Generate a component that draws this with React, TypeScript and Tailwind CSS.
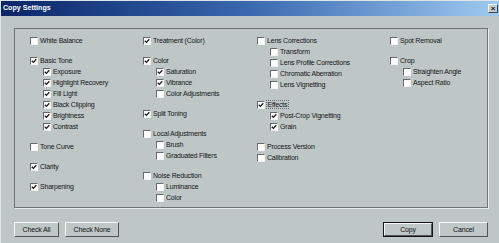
import React from "react";

type Item = { label: string; checked?: boolean; focus?: boolean; tight?: boolean; children?: Item[] };

const columns: { width: string; groups: Item[] }[] = [
  {
    width: "w-[113px]",
    groups: [
      { label: "White Balance" },
      {
        label: "Basic Tone",
        checked: true,
        children: [
          { label: "Exposure", checked: true },
          { label: "Highlight Recovery", checked: true },
          { label: "Fill Light", checked: true },
          { label: "Black Clipping", checked: true },
          { label: "Brightness", checked: true },
          { label: "Contrast", checked: true },
        ],
      },
      { label: "Tone Curve" },
      { label: "Clarity", checked: true },
      { label: "Sharpening", checked: true },
    ],
  },
  {
    width: "w-[114px]",
    groups: [
      { label: "Treatment (Color)", checked: true },
      {
        label: "Color",
        checked: true,
        children: [
          { label: "Saturation", checked: true },
          { label: "Vibrance", checked: true },
          { label: "Color Adjustments" },
        ],
      },
      { label: "Split Toning", checked: true },
      { label: "Local Adjustments", children: [{ label: "Brush" }, { label: "Graduated Filters" }] },
      { label: "Noise Reduction", children: [{ label: "Luminance" }, { label: "Color" }] },
    ],
  },
  {
    width: "w-[133px]",
    groups: [
      {
        label: "Lens Corrections",
        children: [
          { label: "Transform" },
          { label: "Lens Profile Corrections" },
          { label: "Chromatic Aberration" },
          { label: "Lens Vignetting" },
        ],
      },
      {
        label: "Effects",
        checked: true,
        focus: true,
        children: [
          { label: "Post-Crop Vignetting", checked: true },
          { label: "Grain", checked: true },
        ],
      },
      { label: "Process Version" },
      { label: "Calibration", tight: true },
    ],
  },
  {
    width: "flex-1",
    groups: [
      { label: "Spot Removal" },
      { label: "Crop", children: [{ label: "Straighten Angle" }, { label: "Aspect Ratio" }] },
    ],
  },
];

function Box({ checked }: { checked?: boolean }) {
  return <span className="flex h-[8px] w-[8px] shrink-0 items-center justify-center border border-t-[#666a6a] border-l-[#666a6a] border-b-[#f2f4f4] border-r-[#f2f4f4] bg-white">
    {checked && <svg viewBox="0 0 6 6" className="h-[6px] w-[6px]"><path d="M0.8 2.8 L2.4 4.4 L5.3 1.2" stroke="#1b1b1b" strokeWidth="1.3" fill="none" /></svg>}
  </span>;
}

function Row({ item, sub }: { item: Item; sub?: boolean }) {
  return <div className={`flex h-[11px] items-center ${sub ? "pl-[13px]" : ""}`}>
    <Box checked={item.checked} />
    <span className={`whitespace-nowrap leading-none ${item.focus ? "ml-[1px] border border-dotted border-[#6a6e6e] px-[0.5px]" : "ml-[2px]"}`}>{item.label}</span>
  </div>;
}

function Btn({ label, width, primary }: { label: string; width: string; primary?: boolean }) {
  return <div className={`${width} h-[15px] ${primary ? "border border-[#151515]" : ""}`}>
    <div className="flex h-full w-full items-center justify-center border border-t-[#f6f8f8] border-l-[#f6f8f8] border-b-[#4f5454] border-r-[#4f5454] bg-[#bfc7c7] text-[7px] leading-none tracking-[-0.15px] text-[#111]">{label}</div>
  </div>;
}

export default function App() {
  return <div className="flex h-[243px] w-[499px] flex-col overflow-hidden border-l border-t border-[#dfe4e4] bg-[#bec6c6] text-[#141616]" style={{ fontFamily: '"Liberation Sans", Arial, sans-serif' }}>
    <div className="flex h-[15px] shrink-0 items-center justify-between bg-gradient-to-r from-[#0b2468] via-[#3a69b0] to-[#9fcaf0] pl-[2px] pr-[1px]">
      <span className="text-[7.1px] font-bold leading-none text-white">Copy Settings</span>
      <span className="flex h-[9px] w-[10px] items-center justify-center border border-t-[#f4f4f4] border-l-[#f4f4f4] border-b-[#404444] border-r-[#404444] bg-[#c4cbcb] text-[8px] font-bold leading-none text-[#1a1a1a]">×</span>
    </div>
    <div className="ml-[13px] mt-[12px] flex h-[180px] w-[474px] shrink-0 border border-[#6f7575] pl-[15px] pt-[6px] text-[7px] tracking-[-0.2px] shadow-[1px_1px_0_#e8eded]">
      {columns.map((col, ci) => <div key={ci} className={`${col.width} flex flex-col`}>
        {col.groups.map((g, gi) => <div key={gi} className={gi > 0 && !g.tight ? "mt-[9px]" : ""}>
          <Row item={g} />
          {g.children?.map((c, k) => <Row key={k} item={c} sub />)}
        </div>)}
      </div>)}
    </div>
    <div className="mt-[14px] flex pl-[13px] pr-[11px]">
      <div className="flex gap-[6px]">
        <Btn label="Check All" width="w-[45px]" />
        <Btn label="Check None" width="w-[54px]" />
      </div>
      <div className="ml-auto flex gap-[6px]">
        <Btn label="Copy" width="w-[50px]" primary />
        <Btn label="Cancel" width="w-[49px]" />
      </div>
    </div>
  </div>;
}
